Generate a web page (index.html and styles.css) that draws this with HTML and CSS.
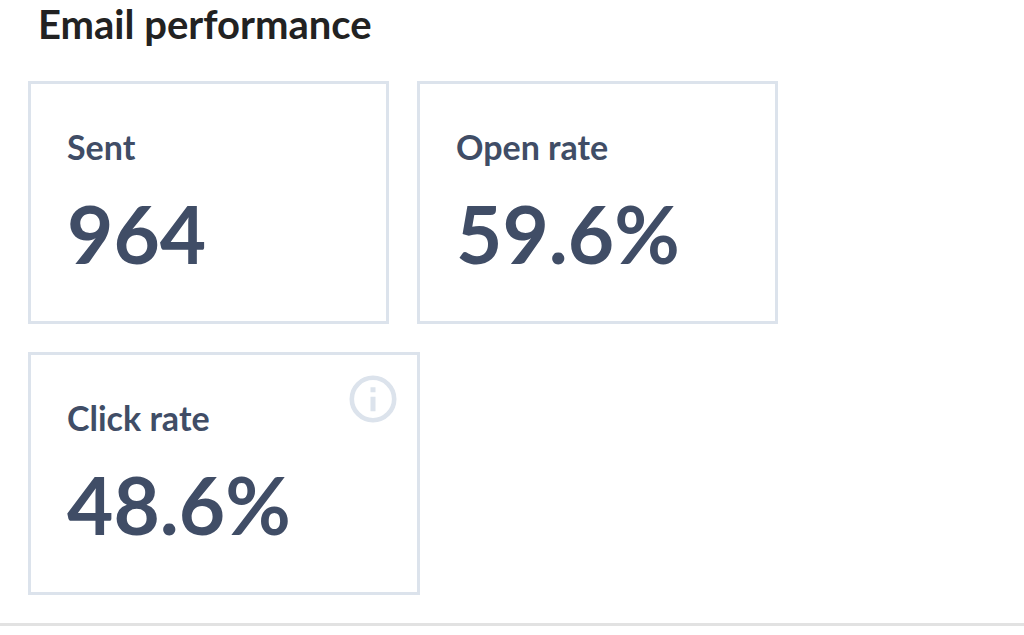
FILE: index.html
```html
<!DOCTYPE html>
<html lang="en">
<head>
<meta charset="utf-8">
<meta name="viewport" content="width=device-width, initial-scale=1">
<title>Email performance</title>
<link rel="stylesheet" href="styles.css">
</head>
<body>
<main class="performance">
  <h1 class="title">Email performance</h1>
  <div class="cards">
    <section class="card">
      <h2 class="label">Sent</h2>
      <p class="value">964</p>
    </section>
    <section class="card">
      <h2 class="label">Open rate</h2>
      <p class="value">59.6%</p>
    </section>
    <section class="card card-wide">
      <h2 class="label">Click rate</h2>
      <p class="value">48.6%</p>
      <button class="info" type="button" aria-label="About click rate">
        <svg viewBox="0 0 48 48" width="48" height="48" aria-hidden="true">
          <circle cx="24" cy="24" r="21.2" fill="none" stroke="currentColor" stroke-width="4.6"/>
          <path d="M24 12.3v5M24 21.8v14.4" fill="none" stroke="currentColor" stroke-width="5"/>
        </svg>
      </button>
    </section>
  </div>
</main>
</body>
</html>
```
FILE: styles.css
```css
* {
  box-sizing: border-box;
}

body {
  margin: 0;
  background: #fff;
  color: #404d66;
  font-family: Lato, "Open Sans", sans-serif;
}

.performance {
  padding: 0 28px 28px;
  border-bottom: 3px solid #e2e2e2;
}

.title {
  margin: 0;
  padding: 0 10px 33px;
  color: #222;
  font-size: 40px;
  font-weight: 700;
  line-height: 48px;
}

.cards {
  display: flex;
  flex-wrap: wrap;
  gap: 28px;
  max-width: 780px;
}

.card {
  position: relative;
  min-width: 361px;
  padding: 41px 36px 39px;
  border: 3px solid #dce3ec;
}

.card-wide {
  min-width: 392px;
}

.label {
  margin: 0;
  font-size: 34px;
  font-weight: 700;
  line-height: 44px;
}

.value {
  margin: 0;
  padding-top: 16px;
  font-size: 80px;
  font-weight: 700;
  line-height: 97px;
}

.info {
  position: absolute;
  top: 20px;
  right: 20px;
  display: flex;
  padding: 0;
  border: 0;
  background: none;
  color: #dce3ec;
}
```
